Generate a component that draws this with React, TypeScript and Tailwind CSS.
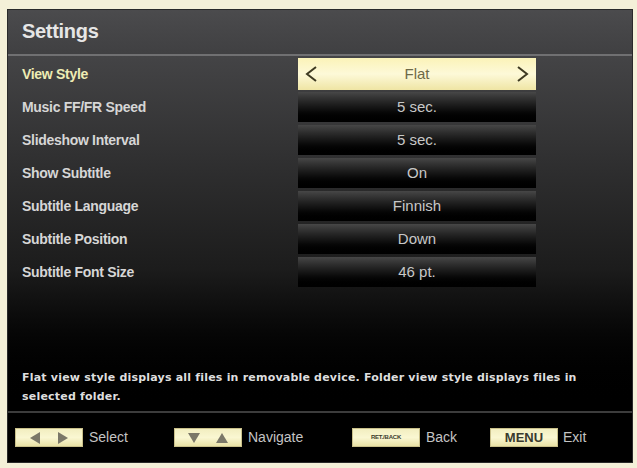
const rows = [
  { label: "View Style", value: "Flat" },
  { label: "Music FF/FR Speed", value: "5 sec." },
  { label: "Slideshow Interval", value: "5 sec." },
  { label: "Show Subtitle", value: "On" },
  { label: "Subtitle Language", value: "Finnish" },
  { label: "Subtitle Position", value: "Down" },
  { label: "Subtitle Font Size", value: "46 pt." },
];

const font = "font-['Liberation_Sans',Arial,sans-serif]";

function Tri({ dir }: { dir: "l" | "r" | "u" | "d" }) {
  const pts = {
    l: "12,1 12,13 2,7",
    r: "2,1 2,13 12,7",
    u: "7,2 13,12 1,12",
    d: "1,2 13,2 7,12",
  }[dir];
  return (
    <svg width="14" height="14" viewBox="0 0 14 14">
      <polygon points={pts} fill="#7b7868" />
    </svg>
  );
}

function Key({ children }: { children: React.ReactNode }) {
  return (
    <div className="w-[68px] h-[19px] flex items-center justify-center gap-[14px] bg-gradient-to-b from-[#f2eec0] via-[#faf7d2] to-[#e9e2a6] border border-[#c9c08a]">
      {children}
    </div>
  );
}

export default function App() {
  return (
    <div className={`w-[637px] h-[468px] bg-[#f4f0d8] pt-[9px] pl-[7px] pr-[4px] pb-[5px] ${font}`}>
      <div className="h-full flex flex-col bg-black border border-[#2a2a2a]">
        <div className="h-[46px] shrink-0 flex items-center pl-[14px] pb-[3px] bg-gradient-to-b from-[#4b4b4d] to-[#404042] border-b-2 border-[#707072]">
          <span className="text-[20px] font-bold text-[#e6e6e6] tracking-[-0.3px]">Settings</span>
        </div>
        <div className="flex-1 flex flex-col bg-gradient-to-b from-[#444446] via-[#1c1c1c] via-60% to-black">
          <div className="flex flex-col gap-[3px] pt-[3px]">
            {rows.map((r, i) => (
              <div key={r.label} className="flex items-center h-[30px]">
                <div
                  className={`w-[290px] pl-[14px] text-[14px] font-bold tracking-[-0.3px] ${
                    i === 0 ? "text-[#eeecb4]" : "text-[#d6d6d6]"
                  }`}
                >
                  {r.label}
                </div>
                {i === 0 ? (
                  <div className="w-[238px] h-[32px] flex items-center justify-between px-[6px] bg-gradient-to-b from-[#fbf3b8] via-[#fdf9d8] to-[#efe5a4]">
                    <svg width="14" height="20" viewBox="0 0 14 20">
                      <polyline points="12,3 3,10 12,17" fill="none" stroke="#3e3a22" strokeWidth="2" />
                    </svg>
                    <span className="text-[15px] text-[#6e6a48]">{r.value}</span>
                    <svg width="14" height="20" viewBox="0 0 14 20">
                      <polyline points="2,3 11,10 2,17" fill="none" stroke="#3e3a22" strokeWidth="2" />
                    </svg>
                  </div>
                ) : (
                  <div className="w-[238px] h-[30px] flex items-center justify-center bg-gradient-to-b from-[#474747] via-[#121212] via-55% to-black text-[15px] text-[#c8c8c8]">
                    {r.value}
                  </div>
                )}
              </div>
            ))}
          </div>
          <div className="mt-auto px-[14px] pb-[5px] font-['DejaVu_Sans',sans-serif] text-[11px] font-bold leading-[19px] tracking-[0.2px] text-[#dedede]">
            Flat view style displays all files in removable device. Folder view style displays files in
            <br />
            selected folder.
          </div>
        </div>
        <div className="h-[51px] shrink-0 flex items-center pl-[7px] border-t-2 border-[#3c3c3c] text-[14px] text-[#c4c4c4]">
          <Key>
            <Tri dir="l" />
            <Tri dir="r" />
          </Key>
          <span className="ml-[6px] w-[85px]">Select</span>
          <Key>
            <Tri dir="d" />
            <Tri dir="u" />
          </Key>
          <span className="ml-[6px] w-[104px]">Navigate</span>
          <Key>
            <span className="text-[6px] font-bold text-[#3a3a2a] tracking-[-0.2px]">RET./BACK</span>
          </Key>
          <span className="ml-[6px] w-[64px]">Back</span>
          <Key>
            <span className="text-[13px] font-bold text-[#3a3a2e]">MENU</span>
          </Key>
          <span className="ml-[5px]">Exit</span>
        </div>
      </div>
    </div>
  );
}
